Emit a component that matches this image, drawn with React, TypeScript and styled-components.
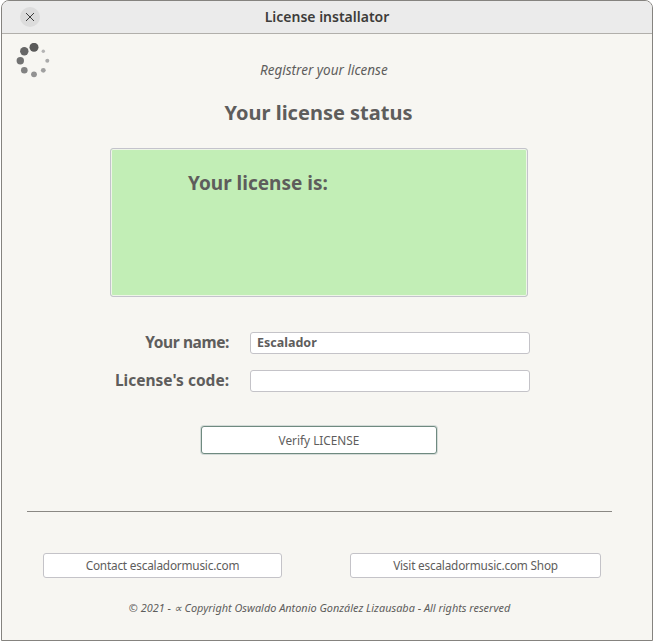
import React from "react";
import styled, { createGlobalStyle } from "styled-components";

const GlobalStyle = createGlobalStyle`
  html, body {
    margin: 0;
    padding: 0;
    background: #ffffff;
  }
  * {
    box-sizing: border-box;
  }
`;

const Window = styled.div`
  width: 653px;
  height: 642px;
  padding: 0 0 1px 1px;
  font-family: "Noto Sans", "Open Sans", sans-serif;
  color: #5e5d5c;
`;

const Frame = styled.div`
  height: 100%;
  display: flex;
  flex-direction: column;
  background: #f7f6f2;
  border: 1px solid #85837f;
  border-top-left-radius: 8px;
  border-top-right-radius: 8px;
  overflow: hidden;
`;

const TitleBar = styled.div`
  flex: none;
  height: 33px;
  padding-left: 18px;
  display: flex;
  align-items: center;
  background: #ebebeb;
  border-bottom: 1px solid #b1afab;
`;

const CloseButton = styled.button`
  width: 20px;
  height: 20px;
  padding: 0;
  display: flex;
  align-items: center;
  justify-content: center;
  border: none;
  border-radius: 50%;
  background: #dcdcdc;
  color: #3d3d3d;
`;

const WindowTitle = styled.div`
  flex: 1;
  padding: 0 38px 2px 0;
  text-align: center;
  font-size: 14px;
  font-weight: 600;
  color: #3d3c3a;
`;

const Content = styled.div`
  flex: 1;
  display: flex;
  flex-direction: column;
  align-items: flex-start;
  padding: 9px 0 0 14px;
`;

const SpinnerRow = styled.div`
  display: flex;
  align-items: flex-end;
  height: 36px;
`;

const Subtitle = styled.div`
  margin-left: 208px;
  font-size: 13.5px;
  font-style: italic;
  line-height: 18px;
`;

const Heading = styled.h1`
  width: 605px;
  margin: 20px 0 0;
  text-align: center;
  font-size: 20px;
  line-height: 28px;
  font-weight: 700;
`;

const StatusBox = styled.div`
  width: 418px;
  height: 149px;
  margin: 21px 0 0 94px;
  padding: 21px 0 0 77px;
  background: #c2eeb6;
  border: 1px solid #c4c3cc;
  border-radius: 3px;
  box-shadow: inset 0 0 0 1px #eef5e8;
`;

const StatusText = styled.div`
  font-size: 19px;
  line-height: 26px;
  font-weight: 700;
`;

const Form = styled.div`
  display: flex;
  flex-direction: column;
  gap: 16px;
  margin-top: 35px;
`;

const FormRow = styled.label`
  display: flex;
  align-items: center;
  height: 22px;
`;

const FieldLabel = styled.span<{ $tracking?: number }>`
  width: 213px;
  padding-bottom: 2px;
  text-align: right;
  font-size: 15.5px;
  font-weight: 700;
  letter-spacing: ${(p) => p.$tracking ?? 0}px;
`;

const Field = styled.input`
  width: 280px;
  height: 22px;
  margin-left: 21px;
  padding: 0 6px 2px;
  background: #ffffff;
  border: 1px solid #c4c3c8;
  border-radius: 3px;
  font-family: inherit;
  font-size: 12.5px;
  font-weight: 700;
  color: #5e5d5c;
  outline: none;
`;

const Button = styled.button<{ $width: number }>`
  width: ${(p) => p.$width}px;
  height: 25px;
  padding: 0 0 2px;
  background: #ffffff;
  border: 1px solid #c4c3c8;
  border-radius: 3px;
  font-family: inherit;
  font-size: 11.8px;
  letter-spacing: -0.2px;
  color: #5e5d5c;
`;

const VerifyButton = styled(Button)`
  height: 28px;
  margin: 34px 0 0 185px;
  padding: 0;
  border: 1px solid #6f8a80;
  box-shadow: 0 0 0 1px #d4dbd8;
  letter-spacing: 0;
`;

const Divider = styled.hr`
  width: 585px;
  height: 1px;
  margin: 57px 0 0 11px;
  border: none;
  background: #8a8884;
`;

const LinkRow = styled.div`
  display: flex;
  gap: 68px;
  margin: 41px 0 0 27px;
`;

const Footer = styled.div`
  width: 607px;
  margin-top: 23px;
  text-align: center;
  font-size: 10.9px;
  line-height: 14px;
  font-style: italic;
`;

const spinnerDots = [
  { cx: 18, cy: 4.3, r: 4.5, fill: "#5a5a5a" },
  { cx: 8.3, cy: 8.2, r: 4.2, fill: "#666666" },
  { cx: 4.3, cy: 17.7, r: 3.7, fill: "#727272" },
  { cx: 8.3, cy: 27.3, r: 3.3, fill: "#828282" },
  { cx: 18, cy: 31.3, r: 2.9, fill: "#929292" },
  { cx: 27.3, cy: 27.3, r: 2.4, fill: "#a0a0a0" },
  { cx: 31.3, cy: 17.7, r: 2, fill: "#aaaaaa" },
  { cx: 27.3, cy: 8.3, r: 1.7, fill: "#b4b4b4" },
];

const Spinner = () => (
  <svg width="36" height="36" viewBox="0 0 36 36">
    {spinnerDots.map((d) => (
      <circle key={`${d.cx}-${d.cy}`} cx={d.cx} cy={d.cy} r={d.r} fill={d.fill} />
    ))}
  </svg>
);

const App = () => (
  <Window>
    <GlobalStyle />
    <Frame>
      <TitleBar>
        <CloseButton aria-label="Close">
          <svg width="10" height="10" viewBox="0 0 10 10">
            <path d="M1 1 L9 9 M9 1 L1 9" stroke="currentColor" strokeWidth="1" fill="none" />
          </svg>
        </CloseButton>
        <WindowTitle>License installator</WindowTitle>
      </TitleBar>
      <Content>
        <SpinnerRow>
          <Spinner />
          <Subtitle>Registrer your license</Subtitle>
        </SpinnerRow>
        <Heading>Your license status</Heading>
        <StatusBox>
          <StatusText>Your license is:</StatusText>
        </StatusBox>
        <Form>
          <FormRow>
            <FieldLabel $tracking={-0.4}>Your name:</FieldLabel>
            <Field defaultValue="Escalador" />
          </FormRow>
          <FormRow>
            <FieldLabel>License's code:</FieldLabel>
            <Field />
          </FormRow>
        </Form>
        <VerifyButton $width={236}>Verify LICENSE</VerifyButton>
        <Divider />
        <LinkRow>
          <Button $width={239}>Contact escaladormusic.com</Button>
          <Button $width={251}>Visit escaladormusic.com Shop</Button>
        </LinkRow>
        <Footer>© 2021 - ∝ Copyright Oswaldo Antonio González Lizausaba - All rights reserved</Footer>
      </Content>
    </Frame>
  </Window>
);

export default App;
